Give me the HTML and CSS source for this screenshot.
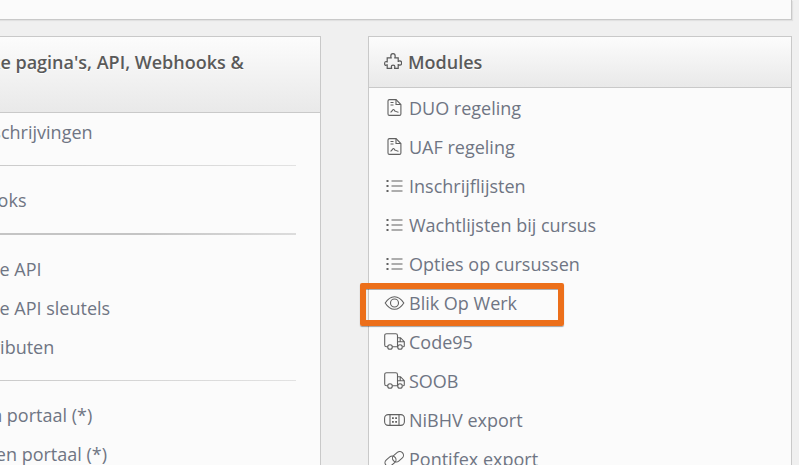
FILE: index.html
```html
<!DOCTYPE html>
<html lang="nl">
<head>
  <meta charset="UTF-8" />
  <meta name="viewport" content="width=device-width, initial-scale=1" />
  <title>Instellingen</title>
  <link rel="stylesheet" href="styles.css">
</head>
<body>
  <svg class="icon-defs" xmlns="http://www.w3.org/2000/svg">
    <symbol id="i-pdf" viewBox="0 0 14 17">
      <path d="M2 .6h6.500l4.900 4.900v9.400a1.500 1.500 0 0 1-1.500 1.500H2a1.500 1.500 0 0 1-1.500-1.500V2.100A1.500 1.500 0 0 1 2 .6z" />
      <path d="M8.500.6v4.900h4.900M3 3.500h3M3 6h3M3 13.200c1.500-.4 2-2.700 3-2.700s1 1.800 2 1.800 1 .9 3 .9" />
    </symbol>
    <symbol id="i-list" viewBox="0 0 16 14">
      <path d="M5 2h11M5 7h11M5 12h11" />
      <path class="dots" d="M0 1h2v2H0zM0 6h2v2H0zM0 11h2v2H0z" />
    </symbol>
    <symbol id="i-eye" viewBox="0 0 20 14">
      <path d="M.7 7C3.200 3 6.300.7 10 .7S16.800 3 19.300 7c-2.500 4-5.600 6.300-9.300 6.300S3.200 11 .7 7z" />
      <circle cx="10" cy="7" r="4" />
    </symbol>
    <symbol id="i-truck" viewBox="0 0 21 17">
      <path d="M3.800 13.700H2.500A1.800 1.800 0 0 1 .7 11.900V2.500A1.800 1.800 0 0 1 2.500.7h9.200a1.800 1.800 0 0 1 1.800 1.800v11.200H8.200" />
      <path d="M13.500 4.700h3l3.800 4v4a1 1 0 0 1-1 1h-.6M13.500 13.700h.3M13.500 8.700h6.800M16.200 4.700v4" />
      <circle cx="6" cy="14" r="2.300" />
      <circle cx="16" cy="14" r="2.300" />
    </symbol>
    <symbol id="i-card" viewBox="0 0 21 12">
      <rect x=".6" y=".6" width="19.800" height="10.800" rx="3.600" />
      <path d="M6 .6v10.800M15 .6v10.800" />
      <path class="dots" d="M8 3.300h1.800v1.800H8zM11.200 3.300H13v1.800h-1.800zM8 6.900h1.800v1.800H8zM11.200 6.900H13v1.800h-1.800z" />
    </symbol>
    <symbol id="i-link" viewBox="0 0 21 18">
      <rect x=".5" y="7.500" width="12" height="7.500" rx="3.750" transform="rotate(-40 6.500 11.250)" />
      <rect x="8" y="3" width="12" height="7.500" rx="3.750" transform="rotate(-40 14 6.750)" />
    </symbol>
    <symbol id="i-puzzle" viewBox="0 0 18 18">
      <path d="M6.800 3.200C6.800 1.800 7.800.6 9 .6s2.200 1.200 2.200 2.600c0 .8-.4 1.100-.4 1.700h3.400v3.400c.6 0 .9-.4 1.500-.4 1.100 0 2 .9 2 2.100s-.9 2.100-2 2.100c-.6 0-.9-.4-1.500-.4v3.600h-3.600c0-.6.300-.9.300-1.500 0-1-.8-1.700-1.800-1.700s-1.800.7-1.800 1.700c0 .6.300.9.300 1.500H3.200v-3.400c-.5 0-.8.300-1.300.3C1 12.700.6 11.700.6 10.600s.4-2.100 1.300-2.100c.5 0 .8.300 1.300.3V4.900h4c0-.6-.4-.9-.4-1.700z" />
    </symbol>
  </svg>

  <div class="top-panel"></div>

  <div class="columns">
    <section class="card card-left">
      <h2 class="card-header">Publieke pagina's, API, Webhooks &amp; Zapier</h2>
      <div class="card-body">
        <a class="row">Elke inschrijvingen</a>
        <hr class="divider">
        <a class="row">Webhooks</a>
        <hr class="divider divider-thick">
        <a class="row">Publieke API</a>
        <a class="row">Publieke API sleutels</a>
        <a class="row">API attributen</a>
        <hr class="divider">
        <a class="row">Klanten portaal (*)</a>
        <a class="row">Cursisten portaal (*)</a>
      </div>
    </section>

    <section class="card">
      <h2 class="card-header"><svg class="icon-head"><use href="#i-puzzle"/></svg>Modules</h2>
      <div class="card-body">
        <a class="row"><svg class="icon icon-pdf"><use href="#i-pdf"/></svg>DUO regeling</a>
        <a class="row"><svg class="icon icon-pdf"><use href="#i-pdf"/></svg>UAF regeling</a>
        <a class="row"><svg class="icon icon-list"><use href="#i-list"/></svg>Inschrijflijsten</a>
        <a class="row"><svg class="icon icon-list"><use href="#i-list"/></svg>Wachtlijsten bij cursus</a>
        <a class="row"><svg class="icon icon-list"><use href="#i-list"/></svg>Opties op cursussen</a>
        <a class="row"><svg class="icon icon-eye"><use href="#i-eye"/></svg>Blik Op Werk</a>
        <a class="row"><svg class="icon icon-truck"><use href="#i-truck"/></svg>Code95</a>
        <a class="row"><svg class="icon icon-truck"><use href="#i-truck"/></svg>SOOB</a>
        <a class="row"><svg class="icon icon-card"><use href="#i-card"/></svg>NiBHV export</a>
        <a class="row"><svg class="icon icon-link"><use href="#i-link"/></svg>Pontifex export</a>
      </div>
    </section>
  </div>

  <!-- annotation box round the Blik Op Werk row -->
  <div class="marker"></div>
</body>
</html>
```

FILE: styles.css
```css
* {
  margin: 0;
  padding: 0;
  box-sizing: border-box;
}

html, body {
  height: 100%;
  overflow: hidden;
}

body {
  position: relative;
  background: #f0f0f0;
  font-family: 'Open Sans', sans-serif;
  color: #6f7583;
}

.icon-defs {
  display: none;
}

.top-panel {
  height: 20px;
  width: 895px;
  margin-left: -103px;
  background: #fbfbfb;
  border-right: 1px solid #c9c9c9;
  border-bottom: 1px solid #c9c9c9;
  box-shadow: 1px 1px 1px rgba(0, 0, 0, 0.06);
}

.columns {
  display: grid;
  grid-template-columns: 424px 424px;
  gap: 47px;
  margin-top: 16px;
  margin-left: -103px;
  align-items: start;
}

.card {
  background: #fbfbfb;
  border: 1px solid #c9c9c9;
  height: 600px;
}

.card-header {
  display: flex;
  align-items: center;
  gap: 6px;
  padding: 13px 24px 12.5px 15px;
  font-size: 18px;
  font-weight: 600;
  line-height: 24.5px;
  color: #5a5a5a;
  background: linear-gradient(#fcfcfc, #e9e9e9);
  border-bottom: 1px solid #c9c9c9;
  text-shadow: 0 1px 0 #fff;
}

.card-left .card-header {
  padding-left: 38px;
  padding-right: 60px;
}

.card-body {
  padding: 0 24px 0 15px;
}

.row {
  display: flex;
  align-items: center;
  gap: 4px;
  height: 39px;
  font-size: 18px;
  white-space: nowrap;
}

.card-left .row {
  padding-left: 25px;
}

.divider {
  border: 0;
  height: 1px;
  margin: 13px 0 15px;
  background: linear-gradient(90deg, #c4c4c4, #e2e2e2);
}

.divider-thick {
  height: 2px;
  background: linear-gradient(90deg, #c4c4c4 60%, #dcdcdc);
}

/* every icon sits centred in the same slot so the labels line up */
.icon {
  width: 21px;
  flex: none;
  fill: none;
  stroke: #616161;
  stroke-width: 1.1;
}

.icon-head {
  width: 18px;
  height: 18px;
  flex: none;
  fill: none;
  stroke: #5a5a5a;
  stroke-width: 1.2;
}

.dots {
  fill: #616161;
  stroke: none;
}

.icon-pdf { height: 17px; }
.icon-list { height: 14px; }
.icon-eye { height: 14px; }
.icon-truck { height: 17px; }
.icon-card { height: 12px; }
.icon-link { height: 18px; }

.marker {
  position: absolute;
  left: 360px;
  top: 283px;
  width: 204px;
  height: 43px;
  border: 6px solid #ec6f1a;
  border-radius: 2px;
  box-shadow: 0 1px 1px rgba(0, 0, 0, 0.35), inset 0 1px 0 rgba(0, 0, 0, 0.3);
}
```
